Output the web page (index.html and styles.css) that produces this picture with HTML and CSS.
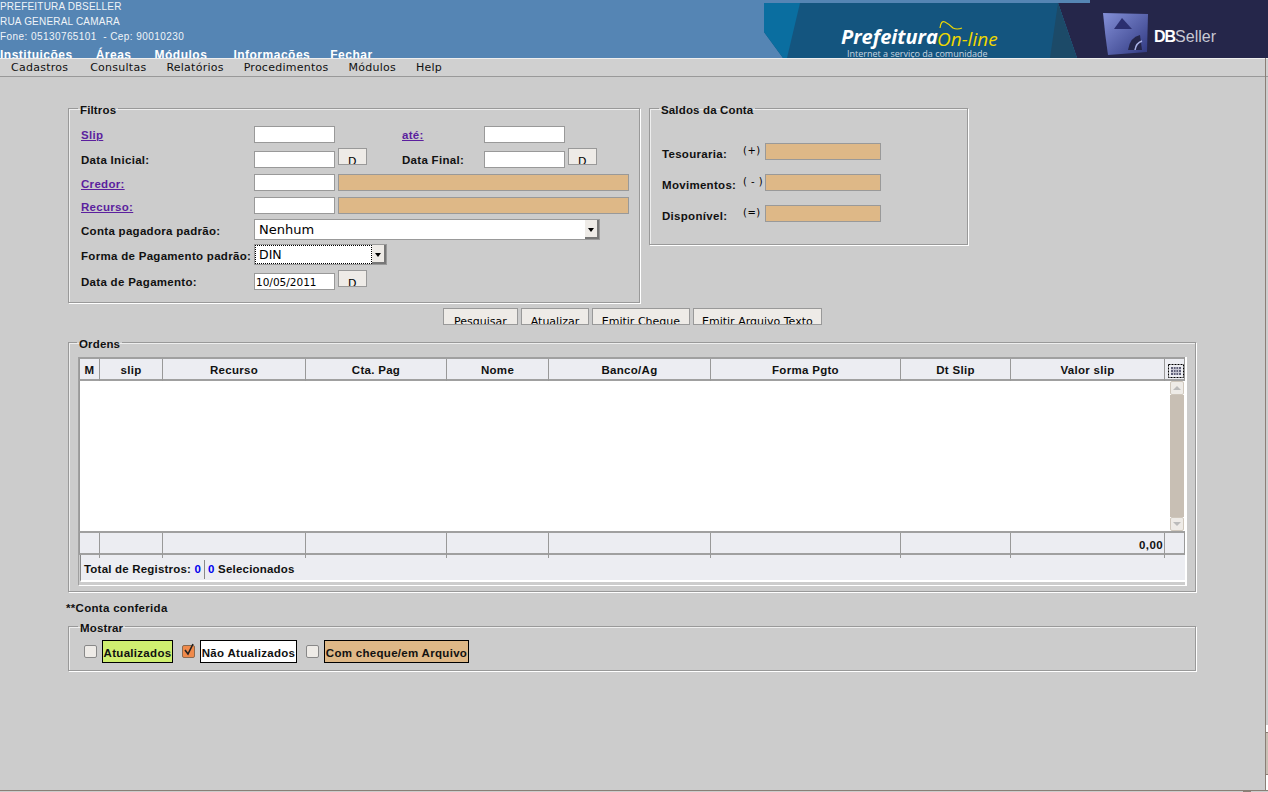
FILE: index.html
```html
<!DOCTYPE html>
<html lang="pt-BR">
<head>
  <meta charset="UTF-8">
  <title>Prefeitura On-line</title>
  <link rel="stylesheet" href="styles.css">
</head>
<body>
  <div class="topo">
    <div class="topo-info">
      <div class="endereco">PREFEITURA DBSELLER</div>
      <div class="endereco">RUA GENERAL CAMARA</div>
      <div class="endereco fone">Fone: 05130765101 &nbsp;- Cep: 90010230</div>
      <div class="nav-topo">
        <a>Instituições</a>
        <a>Áreas</a>
        <a>Módulos</a>
        <a>Informações</a>
        <a>Fechar</a>
      </div>
    </div>
    <div class="banner">
      <svg width="504" height="58" viewBox="0 0 504 58">
        <rect width="504" height="58" fill="#5585b4"/>
        <polygon points="294,3 326,3 326,0 504,0 504,58 313,58" fill="#25264a"/>
        <polygon points="0,3 294,3 313,58 19,58 0,32" fill="#14557f"/>
        <polygon points="0,3 36,3 23,58 19,58 0,32" fill="#0a6ea0"/>
        <polygon points="294,3 313,58 286,58" fill="#1c4a68"/>
        <defs>
          <linearGradient id="cubo" x1="0" y1="0" x2="1" y2="1">
            <stop offset="0" stop-color="#8490d8"/>
            <stop offset="1" stop-color="#2f3880"/>
          </linearGradient>
        </defs>
        <path d="M339 13 L384 14 L383 52 L344 55 Q341 35 339 13Z" fill="url(#cubo)"/>
        <path d="M358 18 L368 29 L350 29Z" fill="#2b2f70"/>
        <path d="M364 50 Q366 37 376 35 L378 50Z" fill="#25264a"/>
        <path d="M371 50 Q372 43 378 41" fill="none" stroke="#aab2e6" stroke-width="1.5"/>
        <text x="77" y="44" class="logo-pref">Prefeitura</text>
        <text x="173" y="46" class="logo-online">On-line</text>
        <path d="M176 28 Q177 20 181 22 Q185 24 189 28 Q193 30 198 28" fill="none" stroke="#f0d800" stroke-width="1.2"/>
        <text x="83" y="57" class="logo-sub">Internet a serviço da comunidade</text>
        <text x="390" y="42" class="logo-db">DB<tspan class="logo-seller">Seller</tspan></text>
      </svg>
    </div>
  </div>

  <div class="menu">
    <a>Cadastros</a>
    <a>Consultas</a>
    <a>Relatórios</a>
    <a>Procedimentos</a>
    <a>Módulos</a>
    <a>Help</a>
  </div>

  <div class="conteudo">
    <div class="blocos">
      <fieldset class="filtros">
        <legend>Filtros</legend>
        <div class="linha l-slip">
          <a class="rotulo link">Slip</a>
          <input class="campo" type="text">
          <a class="rotulo-2 link">até:</a>
          <input class="campo" type="text">
        </div>
        <div class="linha l-data">
          <span class="rotulo">Data Inicial:</span>
          <input class="campo" type="text">
          <span class="btn-d">D</span>
          <span class="rotulo-2 curto">Data Final:</span>
          <input class="campo" type="text">
          <span class="btn-d">D</span>
        </div>
        <div class="linha l-cod">
          <a class="rotulo link">Credor:</a>
          <input class="campo" type="text">
          <span class="campo-desc"></span>
        </div>
        <div class="linha l-cod">
          <a class="rotulo link">Recurso:</a>
          <input class="campo" type="text">
          <span class="campo-desc"></span>
        </div>
        <div class="linha l-conta">
          <span class="rotulo">Conta pagadora padrão:</span>
          <div class="combo combo-grande"><span class="combo-txt">Nenhum</span><span class="combo-seta"></span></div>
        </div>
        <div class="linha l-forma">
          <span class="rotulo">Forma de Pagamento padrão:</span>
          <div class="combo combo-forma"><span class="combo-txt foco">DIN</span><span class="combo-seta"></span></div>
        </div>
        <div class="linha l-pagto">
          <span class="rotulo">Data de Pagamento:</span>
          <span class="campo campo-data">10/05/2011</span>
          <span class="btn-d">D</span>
        </div>
      </fieldset>

      <fieldset class="saldos">
        <legend>Saldos da Conta</legend>
        <div class="saldo"><span class="saldo-nome">Tesouraria:</span><span class="saldo-sinal">(+)</span><span class="campo-saldo"></span></div>
        <div class="saldo"><span class="saldo-nome">Movimentos:</span><span class="saldo-sinal">( - )</span><span class="campo-saldo"></span></div>
        <div class="saldo"><span class="saldo-nome">Disponível:</span><span class="saldo-sinal">(=)</span><span class="campo-saldo"></span></div>
      </fieldset>
    </div>

    <div class="botoes">
      <span class="botao">Pesquisar</span>
      <span class="botao">Atualizar</span>
      <span class="botao">Emitir Cheque</span>
      <span class="botao">Emitir Arquivo Texto</span>
    </div>

    <fieldset class="ordens">
      <legend>Ordens</legend>
      <div class="grade">
        <div class="grade-linha grade-topo">
          <span>M</span><span>slip</span><span>Recurso</span><span>Cta. Pag</span><span>Nome</span><span>Banco/Ag</span><span>Forma Pgto</span><span>Dt Slip</span><span>Valor slip</span>
          <span class="icone-grade">
            <svg width="16" height="14" viewBox="0 0 16 14">
              <rect x="0.5" y="0.5" width="15" height="13" fill="none" stroke="#000" stroke-dasharray="2 1"/>
              <rect x="3" y="3" width="10" height="8" fill="#5f6078"/>
              <path d="M3 5.5H13M3 8.5H13M5.5 3V11M8 3V11M10.5 3V11" stroke="#c8c8d4" stroke-width="1"/>
            </svg>
          </span>
        </div>
        <div class="grade-corpo">
          <div class="rolagem">
            <span class="rol-btn"><i class="seta-cima"></i></span>
            <span class="rol-barra"></span>
            <span class="rol-btn"><i class="seta-baixo"></i></span>
          </div>
        </div>
        <div class="grade-linha grade-rodape">
          <span></span><span></span><span></span><span></span><span></span><span></span><span></span><span></span><span class="total">0,00</span><span></span>
        </div>
        <div class="grade-status">
          <span class="status-item">Total de Registros: <b>0</b></span>
          <span class="status-item status-sel"><b>0</b> Selecionados</span>
        </div>
      </div>
    </fieldset>

    <div class="nota">**Conta conferida</div>

    <fieldset class="mostrar">
      <legend>Mostrar</legend>
      <span class="check"></span>
      <span class="etiqueta verde">Atualizados</span>
      <span class="check marcado">
        <svg width="14" height="15" viewBox="0 0 14 15"><path d="M3 7 L6 11 L11 1" fill="none" stroke="#222" stroke-width="1.6"/></svg>
      </span>
      <span class="etiqueta branca">Não Atualizados</span>
      <span class="check"></span>
      <span class="etiqueta tan">Com cheque/em Arquivo</span>
    </fieldset>
  </div>

  <div class="barra-lateral"><span class="barra-trilho"><span class="barra-polegar"></span></span></div>
  <div class="barra-inferior"><span class="barra-polegar-h"></span></div>
</body>
</html>
```

FILE: styles.css
```css
* {
  box-sizing: border-box;
}

html, body {
  height: 100%;
}

body {
  margin: 0;
  height: 792px;
  overflow: hidden;
  position: relative;
  background-color: #cccccc;
  font-family: "Liberation Sans", Arial, sans-serif;
  font-size: 11.5px;
  letter-spacing: 0.3px;
  color: #000;
}

/* topo */
.topo {
  display: flex;
  justify-content: space-between;
  height: 58px;
  overflow: hidden;
  background-color: #5585b4;
  color: #fff;
}

.endereco {
  height: 15px;
  line-height: 13px;
  font-size: 10px;
  letter-spacing: 0.2px;
  white-space: nowrap;
  color: #f0f4f8;
}

.fone {
  letter-spacing: 0.43px;
}

.nav-topo {
  display: flex;
  gap: 23px;
  margin-top: 3px;
  font-size: 12px;
  font-weight: bold;
  letter-spacing: 0.5px;
  line-height: 15px;
}

.nav-topo a:nth-child(4) {
  margin-left: 3px;
}

.nav-topo a:nth-child(5) {
  margin-left: -3px;
}

.banner {
  width: 504px;
  height: 58px;
  letter-spacing: 0;
}

.banner svg {
  display: block;
}

.logo-pref {
  font: italic bold 20px "Open Sans", sans-serif;
  fill: #fff;
}

.logo-online {
  font: italic 19px "Open Sans", sans-serif;
  fill: #f0d800;
}

.logo-sub {
  font: 9px "Open Sans", sans-serif;
  fill: #c9d6e0;
}

.logo-db {
  font: bold 16px "Liberation Sans", sans-serif;
  fill: #fff;
  letter-spacing: -1px;
}

.logo-seller {
  font-weight: normal;
  fill: #c8c9d4;
  letter-spacing: 0;
}

/* menu */
.menu {
  display: flex;
  gap: 20px;
  height: 19px;
  padding-left: 11px;
  line-height: 18px;
  background-color: #d0d0d0;
  border-top: 1px solid #eeeeee;
  border-bottom: 1px solid #999999;
  font-family: "DejaVu Sans", sans-serif;
  font-size: 11px;
  letter-spacing: 0.25px;
  color: #111;
}

.menu a:first-child {
  margin-right: 2px;
}

/* conteudo */
.conteudo {
  padding: 23px 0 0 68px;
  width: 1197px;
}

.blocos {
  display: flex;
  gap: 9px;
  align-items: flex-start;
}

fieldset {
  margin: 0;
  min-width: 0;
  padding: 0;
  border: 1px solid #999999;
  box-shadow: 1px 1px 0 #ffffff, inset 1px 1px 0 #eeeeee;
}

legend {
  margin-left: -3px;
  padding: 4px 2px 0;
  font-weight: bold;
  line-height: 13px;
  letter-spacing: 0.15px;
  color: #111;
}

.filtros {
  width: 572px;
  height: 203px;
  padding: 9px 0 0 12px;
}

.linha {
  display: flex;
  align-items: flex-start;
  font-weight: bold;
}

.l-slip { height: 25px; }
.l-data { height: 23px; }
.l-cod { height: 23px; }
.l-conta { height: 25px; }
.l-forma { height: 28px; }

.rotulo {
  width: 173px;
  flex: none;
  line-height: 19px;
  white-space: nowrap;
  color: #111;
}

.l-cod .rotulo { line-height: 21px; }
.l-conta .rotulo { line-height: 23px; }
.l-forma .rotulo { line-height: 23px; }

.rotulo-2 {
  width: 82px;
  flex: none;
  margin-left: 67px;
  line-height: 19px;
  color: #111;
}

.rotulo-2.curto {
  margin-left: 35px;
}

.link {
  color: #5b1f9e;
  text-decoration: underline;
}

.campo {
  display: block;
  width: 81px;
  height: 17px;
  flex: none;
  padding: 0 1px;
  background-color: #fff;
  border: 1px solid #999999;
  border-radius: 0;
  outline: none;
}

.campo-data {
  font-family: "DejaVu Sans", sans-serif;
  font-size: 10.5px;
  letter-spacing: 0;
  line-height: 16px;
  font-weight: normal;
  overflow: hidden;
}

.btn-d {
  width: 29px;
  height: 17px;
  flex: none;
  margin: -3px 0 0 3px;
  overflow: hidden;
  text-align: center;
  line-height: 25px;
  font-weight: normal;
  font-size: 11px;
  font-family: "DejaVu Sans", sans-serif;
  background-color: #eeebe7;
  border: 1px solid #999999;
}

.campo-desc {
  width: 291px;
  height: 17px;
  flex: none;
  margin-left: 3px;
  background-color: #deb887;
  border: 1px solid #999999;
}

.combo {
  display: flex;
  height: 21px;
  flex: none;
  background-color: #fff;
  border: 1px solid #999999;
  font-family: "DejaVu Sans", sans-serif;
  font-weight: normal;
  letter-spacing: 0;
  font-size: 13px;
}

.combo-grande {
  width: 346px;
  margin-top: -1px;
}

.combo-forma {
  width: 133px;
  margin-top: -1px;
  font-size: 12.5px;
}

.combo-txt {
  flex: 1;
  padding-left: 4px;
  line-height: 20px;
}

.foco {
  outline: 1px dotted #000;
  outline-offset: -1px;
}

.combo-seta {
  position: relative;
  width: 14px;
  background-color: #eeebe7;
  border-right: 2px solid #777;
  border-bottom: 2px solid #777;
}

.combo-seta::after {
  content: "";
  position: absolute;
  left: 3px;
  top: 8px;
  border-left: 3px solid transparent;
  border-right: 3px solid transparent;
  border-top: 4px solid #000;
}

/* saldos */
.saldos {
  width: 319px;
  height: 145px;
  padding: 26px 0 0 12px;
}

.saldo {
  display: flex;
  height: 31px;
  font-weight: bold;
}

.saldo-nome {
  width: 81px;
  line-height: 21px;
  padding-top: 1px;
  white-space: nowrap;
  color: #111;
}

.saldo-sinal {
  width: 22px;
  font-weight: normal;
  font-family: "DejaVu Sans", sans-serif;
  font-size: 10px;
  letter-spacing: 0.5px;
  line-height: 15px;
  white-space: nowrap;
}

.campo-saldo {
  width: 116px;
  height: 17px;
  background-color: #deb887;
  border: 1px solid #999999;
}

/* botoes */
.botoes {
  display: flex;
  gap: 3px;
  height: 17px;
  margin: 5px 0 0 375px;
}

.botao {
  height: 17px;
  padding: 0 9px;
  overflow: hidden;
  line-height: 26px;
  font-family: "DejaVu Sans", sans-serif;
  font-size: 11px;
  letter-spacing: 0;
  white-space: nowrap;
  background-color: #eeebe7;
  border: 1px solid #999999;
}

.botao:first-child {
  padding: 0 10px;
}

.botao:nth-child(n+3) {
  padding: 0 8.5px;
}

/* grade */
.ordens {
  height: 258px;
  width: 1128px;
  margin-top: 9px;
  padding: 6px 0 0 9px;
}

.ordens legend {
  margin-left: -1px;
}

.grade {
  width: 1109px;
  height: 229px;
  border-left: 1px solid #a0a0a0;
  border-right: 2px solid #fff;
  border-bottom: 1px solid #fff;
}

.grade-linha {
  display: grid;
  grid-template-columns: 20px 63px 143px 141px 102px 162px 190px 110px 154px 21px;
  background-color: #ecedf2;
  border-top: 2px solid #a0a0a0;
  border-bottom: 2px solid #a0a0a0;
  border-left: 1px solid #999999;
  border-right: 1px solid #999999;
  height: 24px;
}

.grade-linha span {
  border-right: 1px solid #999999;
  text-align: center;
  font-weight: bold;
  line-height: 23px;
  color: #111;
}

.grade-linha span:last-child {
  border-right: none;
}

.icone-grade {
  display: flex;
  align-items: center;
  justify-content: center;
}

.grade-corpo {
  position: relative;
  height: 150px;
  background-color: #fff;
  border-left: 1px solid #999999;
}

.rolagem {
  position: absolute;
  right: 1px;
  top: 0;
  bottom: 0;
  width: 14px;
  display: flex;
  flex-direction: column;
}

.rol-btn {
  height: 14px;
  position: relative;
  background-color: #eeebe7;
  border: 1px solid #cfc7bc;
  border-radius: 2px;
}

.rol-barra {
  flex: 1;
  background-color: #c8bfb4;
}

.seta-cima, .seta-baixo {
  position: absolute;
  left: 2px;
  top: 4px;
  border-left: 4px solid transparent;
  border-right: 4px solid transparent;
}

.seta-cima { border-bottom: 4px solid #bbb; }
.seta-baixo { border-top: 4px solid #bbb; }

.grade-rodape .total {
  text-align: right;
  padding-right: 1px;
  line-height: 25px;
  letter-spacing: 0.4px;
}

.grade-status {
  display: flex;
  align-items: center;
  height: 27px;
  margin-left: 1px;
  padding: 3px 0 0 3px;
  background-color: #ecedf2;
  border-left: 1px solid #888;
  border-bottom: 2px solid #fff;
  font-weight: bold;
  color: #111;
}

.status-item {
  line-height: 19px;
  letter-spacing: 0.2px;
  padding-right: 3px;
}

.status-item b {
  color: #0000ee;
}

.status-sel {
  border-left: 1px solid #888;
  padding-left: 3px;
}

.nota {
  margin: 10px 0 0 -2px;
  font-weight: bold;
  line-height: 13px;
  height: 13px;
  color: #111;
}

.mostrar {
  display: flex;
  align-items: center;
  width: 1128px;
  height: 53px;
  margin-top: 3px;
  padding: 0 0 2px 15px;
}

.mostrar legend {
  margin-left: -6px;
}

.check {
  position: relative;
  width: 13px;
  height: 13px;
  flex: none;
  background-color: #eeebe7;
  border: 1px solid #888888;
  border-radius: 2px;
}

.check.marcado {
  background-color: #f08a4b;
  border-color: #8a6a50;
}

.check svg {
  position: absolute;
  left: -1px;
  top: -3px;
}

.etiqueta {
  height: 23px;
  margin: 0 9px 0 5px;
  text-align: center;
  line-height: 24px;
  font-weight: bold;
  white-space: nowrap;
  border: 1px solid #000;
  color: #111;
}

.verde { width: 71px; background-color: #cfef70; }
.branca { width: 97px; background-color: #fff; }
.tan { width: 145px; background-color: #deb887; }

/* sobras do quadro da janela */
.barra-lateral {
  position: absolute;
  right: 0;
  top: 58px;
  bottom: 2px;
  width: 3px;
  border-left: 1px solid #8a7f76;
}

.barra-trilho {
  position: absolute;
  left: 0;
  right: 0;
  top: 667px;
  bottom: 0;
  background-color: #fff;
}

.barra-polegar {
  position: absolute;
  left: 0;
  right: 0;
  top: 7px;
  height: 43px;
  background-color: #c8bfb4;
  border-top: 1px solid #8a7f76;
  border-bottom: 1px solid #8a7f76;
}

.barra-inferior {
  position: absolute;
  left: 0;
  right: 0;
  bottom: 1px;
  height: 1px;
  background-color: #8a7f76;
}

.barra-polegar-h {
  position: absolute;
  left: 1243px;
  top: 1px;
  width: 8px;
  height: 1px;
  background-color: #8a7f76;
}
```
